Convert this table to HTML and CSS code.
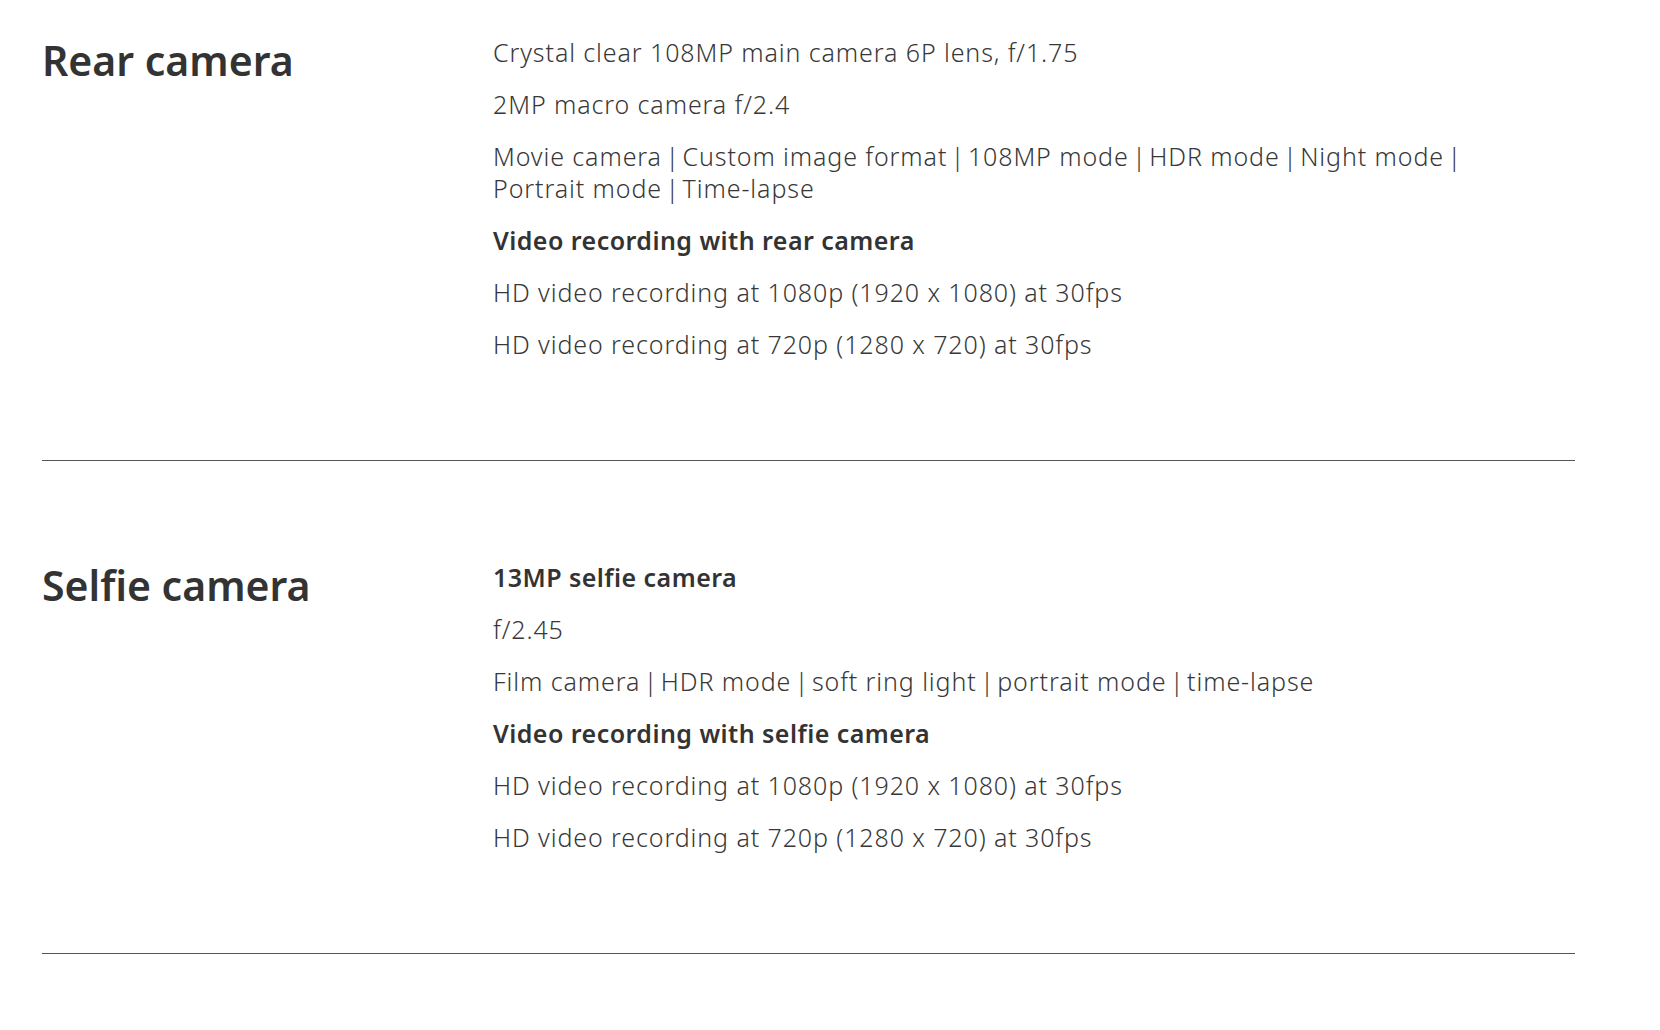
FILE: index.html
```html
<!DOCTYPE html>
<html lang="en">
<head>
<meta charset="utf-8">
<title>Camera specs</title>
<link rel="stylesheet" href="styles.css">
</head>
<body>
<main class="specs">
  <section class="spec">
    <h2 class="spec-title">Rear camera</h2>
    <div class="spec-body">
      <p class="spec-line">Crystal clear 108MP main camera 6P lens, f/1.75</p>
      <p class="spec-line">2MP macro camera f/2.4</p>
      <p class="spec-line">Movie camera<span class="sep"> | </span>Custom image format<span class="sep"> | </span>108MP mode<span class="sep"> | </span>HDR mode<span class="sep"> | </span>Night mode<span class="sep"> | </span>Portrait mode<span class="sep"> | </span>Time-lapse</p>
      <p class="spec-line spec-strong">Video recording with rear camera</p>
      <p class="spec-line">HD video recording at 1080p (1920 x 1080) at 30fps</p>
      <p class="spec-line">HD video recording at 720p (1280 x 720) at 30fps</p>
    </div>
  </section>
  <section class="spec">
    <h2 class="spec-title">Selfie camera</h2>
    <div class="spec-body">
      <p class="spec-line spec-strong">13MP selfie camera</p>
      <p class="spec-line">f/2.45</p>
      <p class="spec-line">Film camera<span class="sep"> | </span>HDR mode<span class="sep"> | </span>soft ring light<span class="sep"> | </span>portrait mode<span class="sep"> | </span>time-lapse</p>
      <p class="spec-line spec-strong">Video recording with selfie camera</p>
      <p class="spec-line">HD video recording at 1080p (1920 x 1080) at 30fps</p>
      <p class="spec-line">HD video recording at 720p (1280 x 720) at 30fps</p>
    </div>
  </section>
</main>
</body>
</html>
```
FILE: styles.css
```css
html, body {
  margin: 0;
  padding: 0;
  background: #fff;
}

body {
  font-family: "Noto Sans", "Open Sans", sans-serif;
  color: #333;
}

.specs {
  width: 1533px;
  margin-left: 42px;
}

.spec {
  display: grid;
  grid-template-columns: 451px 1000px;
  padding: 100px 0;
  border-bottom: 1px solid #555;
}

.spec:first-child {
  padding-top: 36px;
}

.spec-title {
  margin: 0;
  font-size: 41px;
  line-height: 48px;
  font-weight: 600;
  color: #333;
}

.spec-body {
  display: flex;
  flex-direction: column;
  gap: 20px;
}

.spec-line {
  margin: 0;
  font-size: 25px;
  line-height: 32px;
  font-weight: 300;
  letter-spacing: 0.9px;
  color: #383838;
}

.spec-strong {
  font-weight: 600;
  letter-spacing: 0.45px;
  color: #333;
}

.sep {
  letter-spacing: 0;
  word-spacing: -3px;
}
```
